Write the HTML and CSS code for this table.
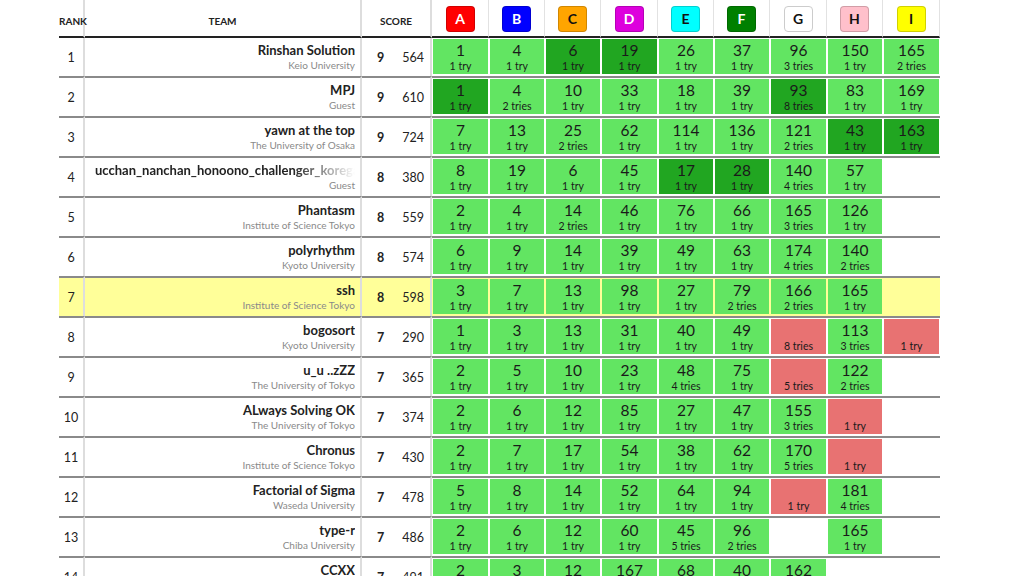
FILE: index.html
```html
<!DOCTYPE html>
<html lang="en">
<head>
<meta charset="utf-8">
<title>Standings</title>
<link rel="stylesheet" href="styles.css">
</head>
<body>
<table class="board">
  <colgroup>
    <col class="w-rank"><col class="w-team"><col class="w-score">
    <col class="w-57"><col class="w-56"><col class="w-56"><col class="w-57"><col class="w-56"><col class="w-56"><col class="w-57"><col class="w-56"><col class="w-57">
  </colgroup>
  <thead>
    <tr>
      <th class="rank">RANK</th>
      <th class="team">TEAM</th>
      <th class="score">SCORE</th>
      <th class="p"><span class="badge b-a">A</span></th>
      <th class="p"><span class="badge b-b">B</span></th>
      <th class="p"><span class="badge b-c">C</span></th>
      <th class="p"><span class="badge b-d">D</span></th>
      <th class="p"><span class="badge b-e">E</span></th>
      <th class="p"><span class="badge b-f">F</span></th>
      <th class="p"><span class="badge b-g">G</span></th>
      <th class="p"><span class="badge b-h">H</span></th>
      <th class="p"><span class="badge b-i">I</span></th>
    </tr>
  </thead>
  <tbody>
    <tr>
      <td class="rank">1</td>
      <td class="team"><div class="name">Rinshan Solution</div><div class="aff">Keio University</div></td>
      <td class="score"><div class="sc"><b>9</b><span>564</span></div></td>
      <td class="p"><div class="c ok"><b>1</b><span>1 try</span></div></td>
      <td class="p"><div class="c ok"><b>4</b><span>1 try</span></div></td>
      <td class="p"><div class="c first"><b>6</b><span>1 try</span></div></td>
      <td class="p"><div class="c first"><b>19</b><span>1 try</span></div></td>
      <td class="p"><div class="c ok"><b>26</b><span>1 try</span></div></td>
      <td class="p"><div class="c ok"><b>37</b><span>1 try</span></div></td>
      <td class="p"><div class="c ok"><b>96</b><span>3 tries</span></div></td>
      <td class="p"><div class="c ok"><b>150</b><span>1 try</span></div></td>
      <td class="p"><div class="c ok"><b>165</b><span>2 tries</span></div></td>
    </tr>
    <tr>
      <td class="rank">2</td>
      <td class="team"><div class="name">MPJ</div><div class="aff">Guest</div></td>
      <td class="score"><div class="sc"><b>9</b><span>610</span></div></td>
      <td class="p"><div class="c first"><b>1</b><span>1 try</span></div></td>
      <td class="p"><div class="c ok"><b>4</b><span>2 tries</span></div></td>
      <td class="p"><div class="c ok"><b>10</b><span>1 try</span></div></td>
      <td class="p"><div class="c ok"><b>33</b><span>1 try</span></div></td>
      <td class="p"><div class="c ok"><b>18</b><span>1 try</span></div></td>
      <td class="p"><div class="c ok"><b>39</b><span>1 try</span></div></td>
      <td class="p"><div class="c first"><b>93</b><span>8 tries</span></div></td>
      <td class="p"><div class="c ok"><b>83</b><span>1 try</span></div></td>
      <td class="p"><div class="c ok"><b>169</b><span>1 try</span></div></td>
    </tr>
    <tr>
      <td class="rank">3</td>
      <td class="team"><div class="name">yawn at the top</div><div class="aff">The University of Osaka</div></td>
      <td class="score"><div class="sc"><b>9</b><span>724</span></div></td>
      <td class="p"><div class="c ok"><b>7</b><span>1 try</span></div></td>
      <td class="p"><div class="c ok"><b>13</b><span>1 try</span></div></td>
      <td class="p"><div class="c ok"><b>25</b><span>2 tries</span></div></td>
      <td class="p"><div class="c ok"><b>62</b><span>1 try</span></div></td>
      <td class="p"><div class="c ok"><b>114</b><span>1 try</span></div></td>
      <td class="p"><div class="c ok"><b>136</b><span>1 try</span></div></td>
      <td class="p"><div class="c ok"><b>121</b><span>2 tries</span></div></td>
      <td class="p"><div class="c first"><b>43</b><span>1 try</span></div></td>
      <td class="p"><div class="c first"><b>163</b><span>1 try</span></div></td>
    </tr>
    <tr>
      <td class="rank">4</td>
      <td class="team"><div class="name long">ucchan_nanchan_honoono_challenger_korega</div><div class="aff">Guest</div></td>
      <td class="score"><div class="sc"><b>8</b><span>380</span></div></td>
      <td class="p"><div class="c ok"><b>8</b><span>1 try</span></div></td>
      <td class="p"><div class="c ok"><b>19</b><span>1 try</span></div></td>
      <td class="p"><div class="c ok"><b>6</b><span>1 try</span></div></td>
      <td class="p"><div class="c ok"><b>45</b><span>1 try</span></div></td>
      <td class="p"><div class="c first"><b>17</b><span>1 try</span></div></td>
      <td class="p"><div class="c first"><b>28</b><span>1 try</span></div></td>
      <td class="p"><div class="c ok"><b>140</b><span>4 tries</span></div></td>
      <td class="p"><div class="c ok"><b>57</b><span>1 try</span></div></td>
      <td class="p"></td>
    </tr>
    <tr>
      <td class="rank">5</td>
      <td class="team"><div class="name">Phantasm</div><div class="aff">Institute of Science Tokyo</div></td>
      <td class="score"><div class="sc"><b>8</b><span>559</span></div></td>
      <td class="p"><div class="c ok"><b>2</b><span>1 try</span></div></td>
      <td class="p"><div class="c ok"><b>4</b><span>1 try</span></div></td>
      <td class="p"><div class="c ok"><b>14</b><span>2 tries</span></div></td>
      <td class="p"><div class="c ok"><b>46</b><span>1 try</span></div></td>
      <td class="p"><div class="c ok"><b>76</b><span>1 try</span></div></td>
      <td class="p"><div class="c ok"><b>66</b><span>1 try</span></div></td>
      <td class="p"><div class="c ok"><b>165</b><span>3 tries</span></div></td>
      <td class="p"><div class="c ok"><b>126</b><span>1 try</span></div></td>
      <td class="p"></td>
    </tr>
    <tr>
      <td class="rank">6</td>
      <td class="team"><div class="name">polyrhythm</div><div class="aff">Kyoto University</div></td>
      <td class="score"><div class="sc"><b>8</b><span>574</span></div></td>
      <td class="p"><div class="c ok"><b>6</b><span>1 try</span></div></td>
      <td class="p"><div class="c ok"><b>9</b><span>1 try</span></div></td>
      <td class="p"><div class="c ok"><b>14</b><span>1 try</span></div></td>
      <td class="p"><div class="c ok"><b>39</b><span>1 try</span></div></td>
      <td class="p"><div class="c ok"><b>49</b><span>1 try</span></div></td>
      <td class="p"><div class="c ok"><b>63</b><span>1 try</span></div></td>
      <td class="p"><div class="c ok"><b>174</b><span>4 tries</span></div></td>
      <td class="p"><div class="c ok"><b>140</b><span>2 tries</span></div></td>
      <td class="p"></td>
    </tr>
    <tr class="mine">
      <td class="rank">7</td>
      <td class="team"><div class="name">ssh</div><div class="aff">Institute of Science Tokyo</div></td>
      <td class="score"><div class="sc"><b>8</b><span>598</span></div></td>
      <td class="p"><div class="c ok"><b>3</b><span>1 try</span></div></td>
      <td class="p"><div class="c ok"><b>7</b><span>1 try</span></div></td>
      <td class="p"><div class="c ok"><b>13</b><span>1 try</span></div></td>
      <td class="p"><div class="c ok"><b>98</b><span>1 try</span></div></td>
      <td class="p"><div class="c ok"><b>27</b><span>1 try</span></div></td>
      <td class="p"><div class="c ok"><b>79</b><span>2 tries</span></div></td>
      <td class="p"><div class="c ok"><b>166</b><span>2 tries</span></div></td>
      <td class="p"><div class="c ok"><b>165</b><span>1 try</span></div></td>
      <td class="p"></td>
    </tr>
    <tr>
      <td class="rank">8</td>
      <td class="team"><div class="name">bogosort</div><div class="aff">Kyoto University</div></td>
      <td class="score"><div class="sc"><b>7</b><span>290</span></div></td>
      <td class="p"><div class="c ok"><b>1</b><span>1 try</span></div></td>
      <td class="p"><div class="c ok"><b>3</b><span>1 try</span></div></td>
      <td class="p"><div class="c ok"><b>13</b><span>1 try</span></div></td>
      <td class="p"><div class="c ok"><b>31</b><span>1 try</span></div></td>
      <td class="p"><div class="c ok"><b>40</b><span>1 try</span></div></td>
      <td class="p"><div class="c ok"><b>49</b><span>1 try</span></div></td>
      <td class="p"><div class="c ng"><b>&nbsp;</b><span>8 tries</span></div></td>
      <td class="p"><div class="c ok"><b>113</b><span>3 tries</span></div></td>
      <td class="p"><div class="c ng"><b>&nbsp;</b><span>1 try</span></div></td>
    </tr>
    <tr>
      <td class="rank">9</td>
      <td class="team"><div class="name">u_u ..zZZ</div><div class="aff">The University of Tokyo</div></td>
      <td class="score"><div class="sc"><b>7</b><span>365</span></div></td>
      <td class="p"><div class="c ok"><b>2</b><span>1 try</span></div></td>
      <td class="p"><div class="c ok"><b>5</b><span>1 try</span></div></td>
      <td class="p"><div class="c ok"><b>10</b><span>1 try</span></div></td>
      <td class="p"><div class="c ok"><b>23</b><span>1 try</span></div></td>
      <td class="p"><div class="c ok"><b>48</b><span>4 tries</span></div></td>
      <td class="p"><div class="c ok"><b>75</b><span>1 try</span></div></td>
      <td class="p"><div class="c ng"><b>&nbsp;</b><span>5 tries</span></div></td>
      <td class="p"><div class="c ok"><b>122</b><span>2 tries</span></div></td>
      <td class="p"></td>
    </tr>
    <tr>
      <td class="rank">10</td>
      <td class="team"><div class="name">ALways Solving OK</div><div class="aff">The University of Tokyo</div></td>
      <td class="score"><div class="sc"><b>7</b><span>374</span></div></td>
      <td class="p"><div class="c ok"><b>2</b><span>1 try</span></div></td>
      <td class="p"><div class="c ok"><b>6</b><span>1 try</span></div></td>
      <td class="p"><div class="c ok"><b>12</b><span>1 try</span></div></td>
      <td class="p"><div class="c ok"><b>85</b><span>1 try</span></div></td>
      <td class="p"><div class="c ok"><b>27</b><span>1 try</span></div></td>
      <td class="p"><div class="c ok"><b>47</b><span>1 try</span></div></td>
      <td class="p"><div class="c ok"><b>155</b><span>3 tries</span></div></td>
      <td class="p"><div class="c ng"><b>&nbsp;</b><span>1 try</span></div></td>
      <td class="p"></td>
    </tr>
    <tr>
      <td class="rank">11</td>
      <td class="team"><div class="name">Chronus</div><div class="aff">Institute of Science Tokyo</div></td>
      <td class="score"><div class="sc"><b>7</b><span>430</span></div></td>
      <td class="p"><div class="c ok"><b>2</b><span>1 try</span></div></td>
      <td class="p"><div class="c ok"><b>7</b><span>1 try</span></div></td>
      <td class="p"><div class="c ok"><b>17</b><span>1 try</span></div></td>
      <td class="p"><div class="c ok"><b>54</b><span>1 try</span></div></td>
      <td class="p"><div class="c ok"><b>38</b><span>1 try</span></div></td>
      <td class="p"><div class="c ok"><b>62</b><span>1 try</span></div></td>
      <td class="p"><div class="c ok"><b>170</b><span>5 tries</span></div></td>
      <td class="p"><div class="c ng"><b>&nbsp;</b><span>1 try</span></div></td>
      <td class="p"></td>
    </tr>
    <tr>
      <td class="rank">12</td>
      <td class="team"><div class="name">Factorial of Sigma</div><div class="aff">Waseda University</div></td>
      <td class="score"><div class="sc"><b>7</b><span>478</span></div></td>
      <td class="p"><div class="c ok"><b>5</b><span>1 try</span></div></td>
      <td class="p"><div class="c ok"><b>8</b><span>1 try</span></div></td>
      <td class="p"><div class="c ok"><b>14</b><span>1 try</span></div></td>
      <td class="p"><div class="c ok"><b>52</b><span>1 try</span></div></td>
      <td class="p"><div class="c ok"><b>64</b><span>1 try</span></div></td>
      <td class="p"><div class="c ok"><b>94</b><span>1 try</span></div></td>
      <td class="p"><div class="c ng"><b>&nbsp;</b><span>1 try</span></div></td>
      <td class="p"><div class="c ok"><b>181</b><span>4 tries</span></div></td>
      <td class="p"></td>
    </tr>
    <tr>
      <td class="rank">13</td>
      <td class="team"><div class="name">type-r</div><div class="aff">Chiba University</div></td>
      <td class="score"><div class="sc"><b>7</b><span>486</span></div></td>
      <td class="p"><div class="c ok"><b>2</b><span>1 try</span></div></td>
      <td class="p"><div class="c ok"><b>6</b><span>1 try</span></div></td>
      <td class="p"><div class="c ok"><b>12</b><span>1 try</span></div></td>
      <td class="p"><div class="c ok"><b>60</b><span>1 try</span></div></td>
      <td class="p"><div class="c ok"><b>45</b><span>5 tries</span></div></td>
      <td class="p"><div class="c ok"><b>96</b><span>2 tries</span></div></td>
      <td class="p"></td>
      <td class="p"><div class="c ok"><b>165</b><span>1 try</span></div></td>
      <td class="p"></td>
    </tr>
    <tr>
      <td class="rank">14</td>
      <td class="team"><div class="name">CCXX</div><div class="aff">Tohoku University</div></td>
      <td class="score"><div class="sc"><b>7</b><span>491</span></div></td>
      <td class="p"><div class="c ok"><b>2</b><span>1 try</span></div></td>
      <td class="p"><div class="c ok"><b>3</b><span>1 try</span></div></td>
      <td class="p"><div class="c ok"><b>12</b><span>1 try</span></div></td>
      <td class="p"><div class="c ok"><b>167</b><span>1 try</span></div></td>
      <td class="p"><div class="c ok"><b>68</b><span>1 try</span></div></td>
      <td class="p"><div class="c ok"><b>40</b><span>1 try</span></div></td>
      <td class="p"><div class="c ok"><b>162</b><span>1 try</span></div></td>
      <td class="p"></td>
      <td class="p"></td>
    </tr>
  </tbody>
</table>
</body>
</html>
```

FILE: styles.css
```css
html, body {
  margin: 0;
  padding: 0;
  background: #fff;
}

body {
  font-family: Lato, "Liberation Sans", sans-serif;
  color: #222;
}

.board {
  margin-left: 59px;
  width: 881px;
  table-layout: fixed;
  border-collapse: separate;
  border-spacing: 0;
}

.w-rank { width: 26px; }
.w-team { width: 277px; }
.w-score { width: 70px; }
.w-56 { width: 56px; }
.w-57 { width: 57px; }

/* header */
.board th {
  height: 38px;
  padding: 0;
  border-bottom: 2px solid #222;
  font-size: 10px;
  font-weight: 700;
  color: #222;
  text-align: center;
  vertical-align: middle;
  box-sizing: border-box;
}

.board th.rank,
.board th.team,
.board th.score {
  padding-top: 5px;
}

.board th.rank,
.board td.rank {
  border-right: 2px solid #ddd;
}

.board th.team,
.board td.team {
  border-right: 2px solid #ddd;
}

.board th.score,
.board td.score {
  border-right: 2px solid #ddd;
}

.board th.p {
  border-right: 1px solid #e2e2e2;
}

.badge {
  display: inline-flex;
  align-items: center;
  justify-content: center;
  width: 27px;
  height: 24px;
  border-radius: 4px;
  border: 1px solid rgba(0, 0, 0, 0.18);
  font-size: 14px;
  font-weight: 700;
  margin-top: 1px;
}

.b-a { background: #ff0000; color: #fff; }
.b-b { background: #0000ff; color: #fff; }
.b-c { background: #ffa500; color: #111; }
.b-d { background: #dd00dd; color: #fff; }
.b-e { background: #00ffff; color: #111; }
.b-f { background: #008000; color: #fff; }
.b-g { background: #fff; color: #111; border-color: #ccc; }
.b-h { background: #ffc0cb; color: #111; }
.b-i { background: #ffff00; color: #111; }

/* body */
.board td {
  padding: 0;
  border-top: 2px solid #8a8a8a;
  vertical-align: middle;
}

.board tbody tr:first-child td {
  border-top: none;
}

.board tr.mine td {
  background: #ffff99;
}

td.rank {
  text-align: center;
  font-size: 12.5px;
}

td.team {
  text-align: right;
  padding: 0 5px 0 10px;
  overflow: hidden;
}

.name {
  font-size: 13px;
  font-weight: 700;
  line-height: 16px;
  white-space: nowrap;
  overflow: hidden;
}

.name.long {
  text-align: left;
  -webkit-mask-image: linear-gradient(to right, #000 76%, transparent 100%);
  mask-image: linear-gradient(to right, #000 76%, transparent 100%);
}

.aff {
  font-size: 10px;
  line-height: 14px;
  color: #8a8a8a;
  white-space: nowrap;
}

.sc {
  display: flex;
  justify-content: space-between;
  align-items: center;
  padding: 0 6px 0 15px;
  font-size: 12.5px;
}

.sc b {
  font-weight: 700;
}

td.p {
  padding: 1px 1px 2px 1px;
}

.c {
  height: 35px;
  box-sizing: border-box;
  padding-top: 2px;
  display: flex;
  flex-direction: column;
  align-items: center;
  color: #1a1a1a;
}

.c b {
  font-weight: 400;
  font-size: 15.5px;
  line-height: 18px;
}

.c span {
  font-size: 10.5px;
  line-height: 15px;
}

.c.ok { background: #62e562; }
.c.first { background: #21a621; }
.c.ng { background: #e87272; }
```
